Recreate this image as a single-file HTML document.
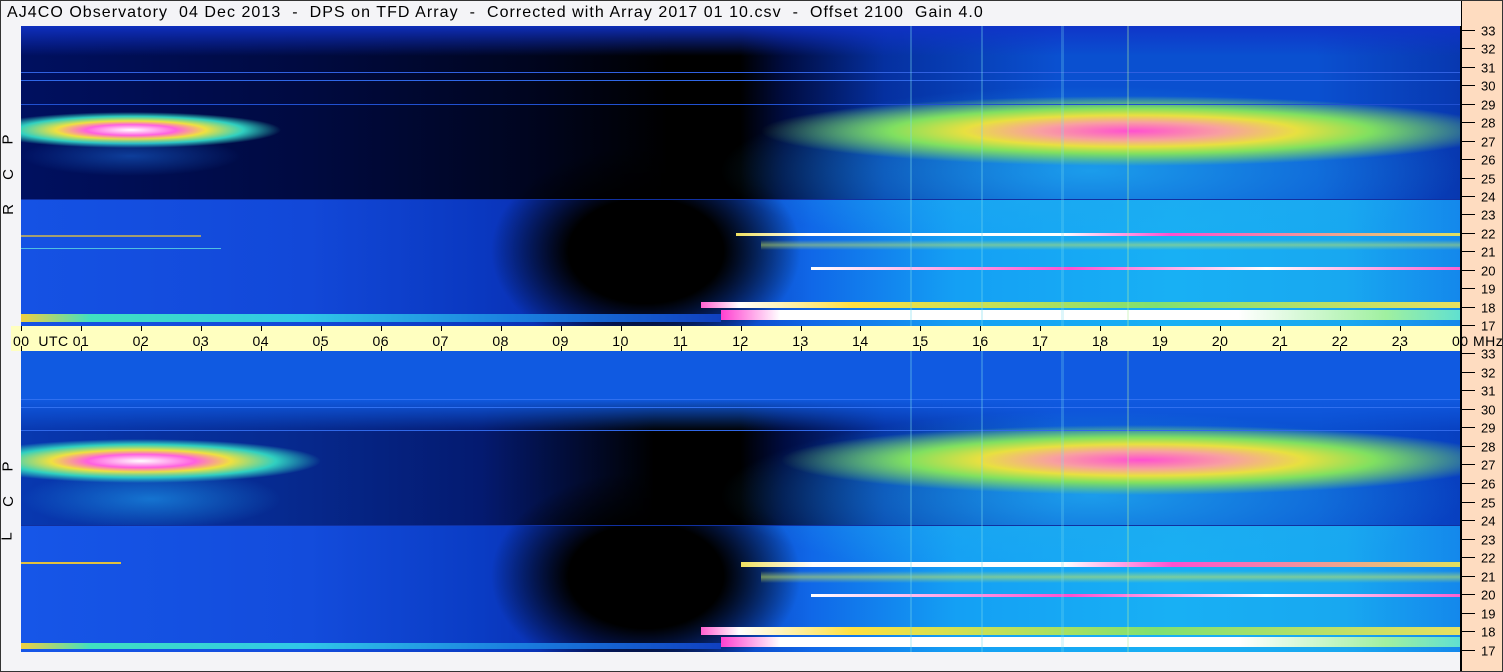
<!DOCTYPE html>
<html><head><meta charset="utf-8"><style>
*{margin:0;padding:0;box-sizing:border-box}
body{width:1503px;height:672px;overflow:hidden;background:#f4f4f7;position:relative;font-family:"Liberation Sans",sans-serif;color:#000}
.ab{position:absolute}
#title{left:7px;top:4px;font-size:16px;white-space:pre;letter-spacing:1.05px}
#peach{left:1461px;top:0;width:42px;height:672px;background:#fedcc0;border-left:1px solid #000}
#border{left:0;top:0;width:1503px;height:672px;border:1px solid #333}
.panel{position:absolute;left:21px;width:1439px;overflow:hidden;background:#000}
.l{position:absolute}
.band{left:11px;top:326px;width:1450px;height:25px;background:#ffffc0}
.hl{position:absolute;top:333px;font-size:14px;transform:translateX(-50%);letter-spacing:0.5px;white-space:nowrap}
.tk{position:absolute;width:1px;height:5px;background:#000}
.ml{position:absolute;left:1481px;font-size:13px;transform:translateY(-50%)}
.mt{position:absolute;left:1461px;width:14px;height:1px;background:#000}
.side{position:absolute;left:3px;font-size:15px;transform:rotate(-90deg);transform-origin:center}
</style></head><body>
<div class="ab" id="peach"></div>
<div class="ab" id="title">AJ4CO Observatory  04 Dec 2013  -  DPS on TFD Array  -  Corrected with Array 2017 01 10.csv  -  Offset 2100  Gain 4.0</div>
<div class="ab band"></div>

<!-- top panel -->
<div class="panel" style="top:26px;height:300px">
 <div class="l" style="left:0;top:0;width:100%;height:174px;background:linear-gradient(90deg,#001060 0%,#000a40 20%,#000520 35%,#000 45%,#000 50%,#000c40 53%,#0530a0 60%,#0a50d0 72%,#0a50d0 90%,#0838b0 100%)"></div>
 <div class="l" style="left:0;top:0;width:100%;height:30px;background:linear-gradient(180deg,rgba(16,50,200,.9),rgba(16,50,200,0))"></div>
 <div class="l" style="left:0;top:174px;width:100%;height:126px;background:linear-gradient(90deg,#1552e4 0%,#1248d8 20%,#0a38c0 32%,#0828a8 40%,#0a40c0 49%,#1068e8 55%,#14a0f4 65%,#18b0f4 80%,#18a8f0 92%,#1488ec 100%)"></div>
 <div class="l" style="left:470px;top:120px;width:310px;height:210px;background:radial-gradient(closest-side,#000 50%,rgba(0,0,0,0) 100%)"></div>
 <div class="l" style="left:700px;top:60px;width:740px;height:170px;background:radial-gradient(closest-side,rgba(30,170,240,.85),rgba(30,170,240,0))"></div>
 <div class="l" style="left:-40px;top:86px;width:300px;height:36px;background:radial-gradient(closest-side,#fff 0%,#ff60e0 30%,#f0e040 50%,#30d0c0 75%,rgba(20,80,220,0) 100%)"></div>
 <div class="l" style="left:0;top:110px;width:220px;height:40px;background:radial-gradient(closest-side,rgba(30,120,240,.45),rgba(0,40,160,0))"></div>
 <div class="l" style="left:740px;top:70px;width:740px;height:70px;background:radial-gradient(closest-side,#ff50d0 0%,#f8a0a0 25%,#e8e040 45%,#80e060 65%,rgba(30,170,230,0) 100%)"></div>
 <div class="l" style="left:0;top:46px;width:100%;height:1px;background:#3060e0"></div>
 <div class="l" style="left:0;top:54px;width:100%;height:1px;background:#3068e8"></div>
 <div class="l" style="left:0;top:78px;width:100%;height:1px;background:#2050d0"></div>
 <div class="l" style="left:0;top:173px;width:100%;height:1px;background:#1030a0"></div>
 <div class="l" style="left:715px;top:207px;width:724px;height:3px;background:linear-gradient(90deg,#f0e060,#fff 10%,#fff 45%,#ff50d0 60%,#e0e060 100%)"></div>
 <div class="l" style="left:790px;top:241px;width:650px;height:3px;background:linear-gradient(90deg,#fff,#ff50d0 40%,#fff 70%,#ff60d0)"></div>
 <div class="l" style="left:740px;top:214px;width:700px;height:10px;background:linear-gradient(180deg,rgba(200,230,90,0),rgba(200,230,90,.5),rgba(200,230,90,0))"></div>
 <div class="l" style="left:0;top:209px;width:180px;height:2px;background:#e0c040;opacity:.7"></div>
 <div class="l" style="left:0;top:222px;width:200px;height:1px;background:#50c0e0"></div>
 <div class="l" style="left:680px;top:276px;width:759px;height:6px;background:linear-gradient(90deg,#ff60d0,#fff 5%,#ffe040 20%,#80e070 60%,#e8e060 100%)"></div>
 <div class="l" style="left:700px;top:284px;width:739px;height:10px;background:linear-gradient(90deg,#ff40d0,#fff 8%,#fff 70%,#a0f0a0 90%,#60e0d0)"></div>
 <div class="l" style="left:0;top:288px;width:700px;height:8px;background:linear-gradient(90deg,#f0d040,#40e0c0 10%,#30c8e8 40%,#1a80e0 70%,#1040c0)"></div>
 <div class="l" style="left:889px;top:0;width:2px;height:300px;background:rgba(120,220,240,.3)"></div>
 <div class="l" style="left:960px;top:0;width:2px;height:300px;background:rgba(120,220,240,.3)"></div>
 <div class="l" style="left:1040px;top:0;width:3px;height:300px;background:rgba(120,220,240,.25)"></div>
 <div class="l" style="left:1106px;top:0;width:2px;height:300px;background:rgba(180,240,160,.3)"></div>
</div>

<!-- bottom panel -->
<div class="panel" style="top:351px;height:301px">
 <div class="l" style="left:0;top:0;width:100%;height:174px;background:linear-gradient(90deg,#0838b0 0%,#062a90 18%,#041a70 32%,#000 44%,#000 50%,#000c40 53%,#0530a0 60%,#0a50d0 72%,#0a50d0 90%,#0840c0 100%)"></div>
 <div class="l" style="left:0;top:0;width:100%;height:80px;background:linear-gradient(180deg,rgba(16,90,225,1) 60%,rgba(16,80,210,0))"></div>
 <div class="l" style="left:0;top:174px;width:100%;height:127px;background:linear-gradient(90deg,#1656e8 0%,#134cdc 20%,#0a3cc4 32%,#0828a8 40%,#0a40c0 49%,#1068e8 55%,#14a0f4 65%,#18b0f4 80%,#18a8f0 92%,#1488ec 100%)"></div>
 <div class="l" style="left:470px;top:120px;width:310px;height:210px;background:radial-gradient(closest-side,#000 50%,rgba(0,0,0,0) 100%)"></div>
 <div class="l" style="left:700px;top:60px;width:740px;height:170px;background:radial-gradient(closest-side,rgba(30,170,240,.85),rgba(30,170,240,0))"></div>
 <div class="l" style="left:-60px;top:88px;width:360px;height:44px;background:radial-gradient(closest-side,#fff 0%,#ff60e0 30%,#f0e040 50%,#30d0c0 75%,rgba(20,80,220,0) 100%)"></div>
 <div class="l" style="left:0;top:118px;width:260px;height:60px;background:radial-gradient(closest-side,rgba(30,160,240,.6),rgba(0,40,160,0))"></div>
 <div class="l" style="left:760px;top:74px;width:720px;height:70px;background:radial-gradient(closest-side,#ff50d0 0%,#f8a0a0 25%,#e8e040 45%,#80e060 65%,rgba(30,170,230,0) 100%)"></div>
 <div class="l" style="left:0;top:48px;width:100%;height:1px;background:#3070f0"></div>
 <div class="l" style="left:0;top:56px;width:100%;height:1px;background:#3070f0"></div>
 <div class="l" style="left:0;top:79px;width:100%;height:1px;background:#3068e8"></div>
 <div class="l" style="left:0;top:174px;width:100%;height:1px;background:#1030a0"></div>
 <div class="l" style="left:720px;top:211px;width:719px;height:5px;background:linear-gradient(90deg,#f0e060,#fff 10%,#fff 45%,#ff50d0 60%,#e0e060 100%)"></div>
 <div class="l" style="left:790px;top:243px;width:650px;height:3px;background:linear-gradient(90deg,#fff,#ff50d0 40%,#fff 70%,#ff60d0)"></div>
 <div class="l" style="left:740px;top:220px;width:700px;height:12px;background:linear-gradient(180deg,rgba(200,230,90,0),rgba(200,230,90,.55),rgba(200,230,90,0))"></div>
 <div class="l" style="left:0;top:211px;width:100px;height:2px;background:#e0c040"></div>
 <div class="l" style="left:680px;top:276px;width:759px;height:8px;background:linear-gradient(90deg,#ff60d0,#fff 5%,#ffe040 20%,#80e070 60%,#e8e060 100%)"></div>
 <div class="l" style="left:700px;top:286px;width:739px;height:10px;background:linear-gradient(90deg,#ff40d0,#fff 8%,#fff 70%,#a0f0a0 90%,#60e0d0)"></div>
 <div class="l" style="left:0;top:292px;width:700px;height:6px;background:linear-gradient(90deg,#f0d040,#40e0c0 10%,#30c8e8 40%,#1a80e0 70%,#1040c0)"></div>
 <div class="l" style="left:889px;top:0;width:2px;height:301px;background:rgba(120,220,240,.3)"></div>
 <div class="l" style="left:960px;top:0;width:2px;height:301px;background:rgba(120,220,240,.3)"></div>
 <div class="l" style="left:1040px;top:0;width:3px;height:301px;background:rgba(120,220,240,.25)"></div>
 <div class="l" style="left:1106px;top:0;width:2px;height:301px;background:rgba(180,240,160,.3)"></div>
</div>

<div class="ab" style="left:1460px;top:26px;width:1px;height:646px;background:#000"></div>

<div class="side" style="top:131px">P</div>
<div class="side" style="top:166px">C</div>
<div class="side" style="top:201px">R</div>
<div class="side" style="top:458px">P</div>
<div class="side" style="top:493px">C</div>
<div class="side" style="top:528px">L</div>

<div id="axis"></div>
<div id="mhz"></div>
<script>
var a=document.getElementById('axis'),h='';
for(var i=0;i<=24;i++){var x=21+i*59.96;
h+='<div class="tk" style="left:'+x.toFixed(1)+'px;top:326px"></div><div class="tk" style="left:'+x.toFixed(1)+'px;top:346px"></div>';
var t=(i<10?'0'+i:''+i);
if(i==0)h+='<div class="hl" style="left:13px;transform:none">00&nbsp; UTC</div>';
else if(i==24)h+='<div class="hl" style="left:1452px;transform:none">00 MHz</div>';
else h+='<div class="hl" style="left:'+x.toFixed(1)+'px">'+t+'</div>';}
a.innerHTML=h;
var m='';
[[30,325],[353,650]].forEach(function(r){for(var f=33;f>=17;f--){var y=r[0]+(33-f)*(r[1]-r[0])/16;
m+='<div class="mt" style="top:'+y.toFixed(1)+'px"></div><div class="ml" style="top:'+(y+1).toFixed(1)+'px">'+f+'</div>';}});
document.getElementById('mhz').innerHTML=m;
</script>
<div class="ab" id="border"></div>
</body></html>
